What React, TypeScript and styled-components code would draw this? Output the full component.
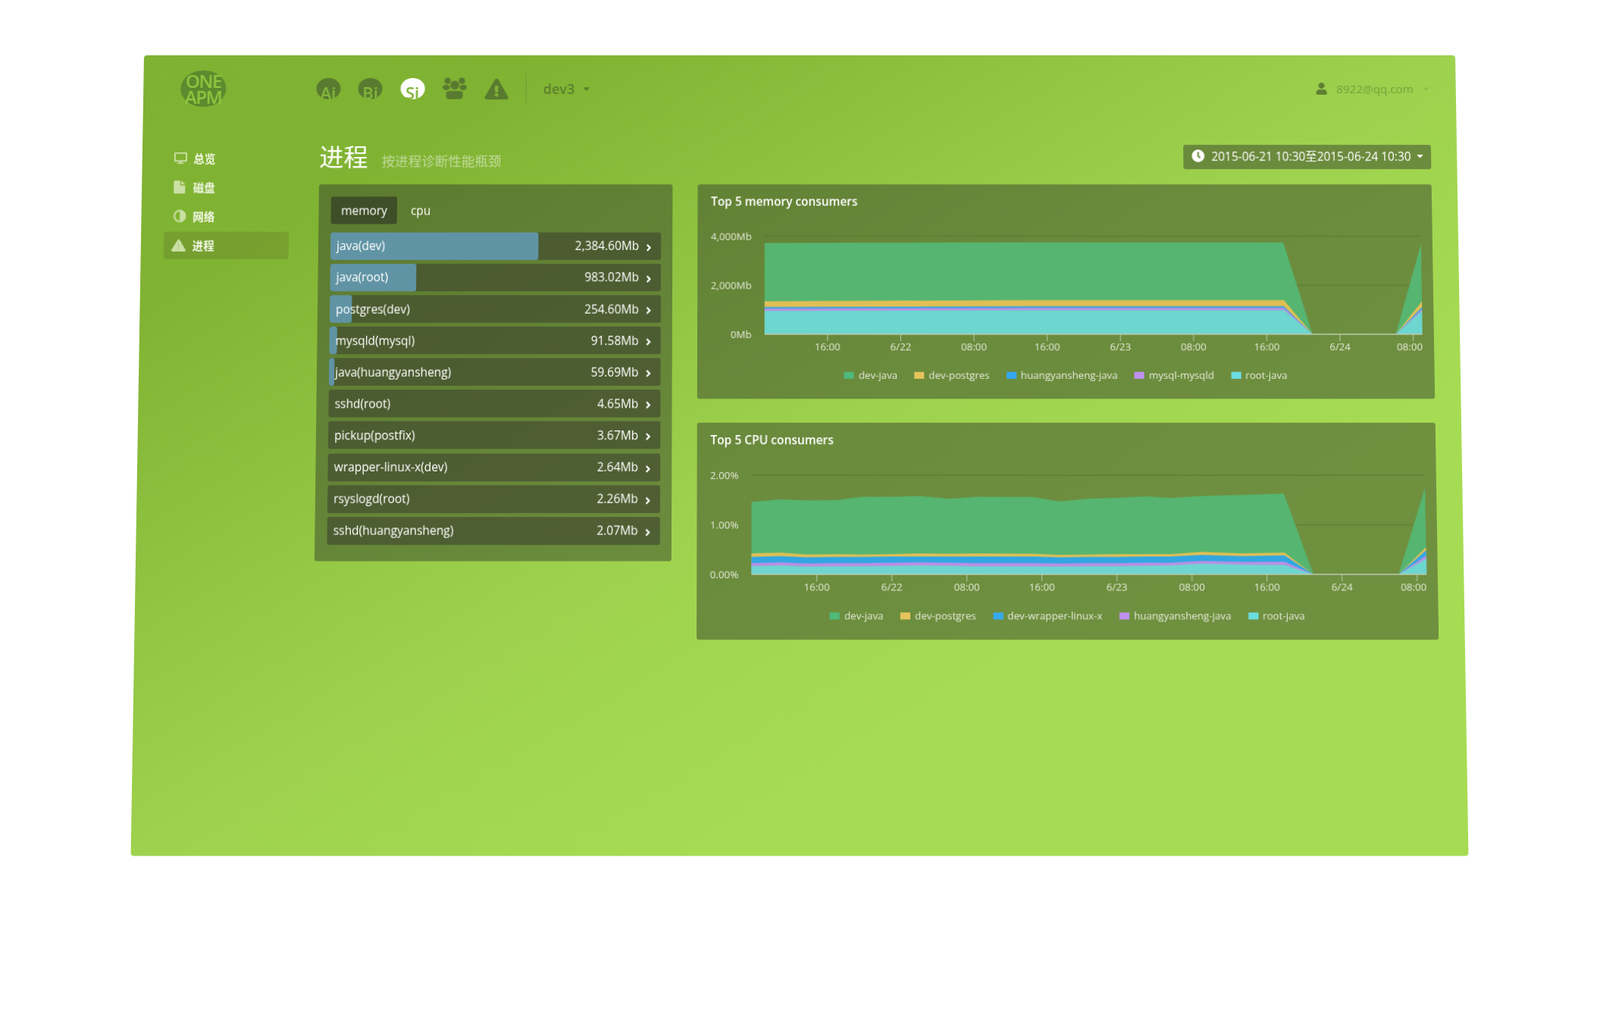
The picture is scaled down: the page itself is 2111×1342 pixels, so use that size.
import React from "react";
import styled, { createGlobalStyle } from "styled-components";
import { ChevronDown } from "lucide-react";
import { FaAdjust, FaAngleRight, FaCaretDown, FaClock, FaDesktop, FaExclamationTriangle, FaUser } from "react-icons/fa";

const Global = createGlobalStyle`
  html, body { margin: 0; padding: 0; background: #fff; }
  body { font-family: "Open Sans", "Noto Sans CJK SC", sans-serif; }
  * { box-sizing: border-box; }
`;

const Stage = styled.div`
  width: 2111px;
  height: 1342px;
  overflow: hidden;
  padding: 73px 0 0 190px;
  background: #fff;
`;

const Page = styled.div`
  width: 1730px;
  height: 1037px;
  border-radius: 4px;
  background: linear-gradient(to bottom right, #7fb232 0%, #80b332 16%, #9ed24e 50%, #a6dc53 72%, #a6dc53 100%);
  transform-origin: 50% 0;
  transform: perspective(2742px) rotateX(3deg);
  filter: blur(0.45px);
  color: #fff;
  font-size: 15.4px;
`;

const Header = styled.header`
  height: 88px;
  display: flex;
  align-items: center;
  padding: 0 33px 0 49px;
`;

const Logo = styled.div`
  width: 60px;
  height: 48px;
  border-radius: 50%;
  background: #5c8a2e;
  color: #8ec63f;
  margin-right: 118.5px;
  display: flex;
  flex-direction: column;
  align-items: center;
  justify-content: center;
  font-size: 24px;
  font-weight: 600;
  line-height: 21px;
  letter-spacing: -1.4px;
`;

const Products = styled.nav`
  display: flex;
  align-items: center;
  gap: 23.5px;
`;

const Product = styled.div<{ $active?: boolean }>`
  width: 32px;
  height: 28px;
  border-radius: 50%;
  overflow: hidden;
  display: flex;
  justify-content: center;
  align-items: flex-start;
  background: ${(p) => (p.$active ? "#fff" : "#587b30")};
  color: ${(p) => (p.$active ? "#7fb232" : "#85b83a")};
  font-size: 22px;
  font-weight: 600;
  line-height: 38px;
`;

const HeadGlyph = styled.span`
  width: 32px;
  display: flex;
  justify-content: center;
  color: #587b30;
  font-size: 31px;
  line-height: 0;
`;

const Divider = styled.span`
  width: 1px;
  height: 40px;
  background: #6f9a3c;
  margin: 0 22px 0 22.5px;
`;

const Tenant = styled.div`
  display: flex;
  align-items: center;
  gap: 9px;
  font-size: 18px;
  font-weight: 600;
  color: #5c7f2e;
`;

const Account = styled.div`
  margin-left: auto;
  display: flex;
  align-items: center;
  color: #74a03c;
  font-size: 15.2px;
`;

const AccountIcon = styled(FaUser)`
  color: #5f8034;
  font-size: 16px;
  margin-right: 12px;
`;

const AccountChevron = styled(ChevronDown)`
  width: 12px;
  height: 12px;
  margin-left: 11px;
`;

const Body = styled.div`
  display: flex;
`;

const Sidebar = styled.aside`
  width: 233px;
  padding: 29px 39px 0 29.5px;
  display: flex;
  flex-direction: column;
  gap: 2.2px;
`;

const NavItem = styled.div<{ $active?: boolean }>`
  height: 36px;
  padding-left: 12px;
  display: flex;
  align-items: center;
  border-radius: 4px;
  background: ${(p) => (p.$active ? "rgba(90, 110, 40, 0.28)" : "transparent")};
  font-size: 14.4px;
  font-weight: 700;
  color: #f4f8e8;
`;

const NavIcon = styled.span`
  width: 26px;
  display: flex;
  color: #cbe0a4;
  font-size: 17px;
  line-height: 0;
`;

const FlippedAdjust = styled(FaAdjust)`
  transform: scaleX(-1);
`;

const WarningSlot = styled(NavIcon)`
  margin-left: -2px;
  width: 28px;
`;

const Main = styled.main`
  width: 1463px;
`;

const TitleRow = styled.div`
  height: 32px;
  margin: 30px 0 20.4px;
  display: flex;
  align-items: center;
  justify-content: space-between;
`;

const TitleGroup = styled.div`
  display: flex;
  align-items: baseline;
  gap: 18px;
`;

const Title = styled.h1`
  margin: 0;
  font-size: 32px;
  line-height: 32px;
  font-weight: 400;
`;

const Subtitle = styled.span`
  font-size: 17.5px;
  color: rgba(255, 255, 255, 0.5);
`;

const DatePicker = styled.div`
  width: 326px;
  height: 32px;
  padding: 0 0 3px 11px;
  border-radius: 3px;
  background: rgba(56, 67, 44, 0.5);
  display: flex;
  align-items: center;
  gap: 9px;
  font-size: 15.4px;
  white-space: nowrap;
`;

const DateClock = styled(FaClock)`
  font-size: 17px;
`;

const DateCaret = styled(FaCaretDown)`
  font-size: 13px;
  margin-left: -3px;
`;

const Columns = styled.div`
  display: flex;
  align-items: flex-start;
  gap: 32.5px;
`;

const ListPanel = styled.section`
  width: 465px;
  height: 490px;
  padding: 16px 15.3px 0 16px;
  border-radius: 3px;
  background: rgba(56, 67, 44, 0.5);
`;

const Tabs = styled.div`
  display: flex;
  gap: 4px;
  margin-bottom: 10.5px;
`;

const Tab = styled.div<{ $active?: boolean }>`
  height: 36px;
  padding: 0 13.5px;
  border-radius: 3px;
  display: flex;
  align-items: center;
  background: ${(p) => (p.$active ? "#3e4f28" : "transparent")};
`;

const Rows = styled.div`
  display: flex;
  flex-direction: column;
  gap: 5.1px;
`;

const Row = styled.div`
  position: relative;
  height: 36px;
  padding: 0 8.5px 0 8px;
  display: flex;
  align-items: center;
  border-radius: 3px;
  overflow: hidden;
  background: rgba(63, 70, 47, 0.62);
`;

const RowBar = styled.div`
  position: absolute;
  left: 0;
  top: 0;
  bottom: 0;
  border-radius: 3px;
  background: #6094a4;
`;

const RowLabel = styled.span`
  position: relative;
  flex: 1;
`;

const RowValue = styled.span`
  position: relative;
`;

const RowChevron = styled(FaAngleRight)`
  position: relative;
  font-size: 14px;
  margin: 4px 0 0 6px;
`;

const Charts = styled.div`
  width: 965.5px;
  display: flex;
  flex-direction: column;
  gap: 31.5px;
`;

const ChartPanel = styled.section`
  height: 279.5px;
  padding-top: 12.6px;
  border-radius: 3px;
  background: rgba(56, 67, 44, 0.5);
`;

const ChartTitle = styled.h2`
  margin: 0 0 13.4px 18px;
  font-size: 15.4px;
  line-height: 20px;
  font-weight: 600;
  color: #fff;
`;

const Plot = styled.svg`
  display: block;
`;

const AxisText = styled.text`
  font-family: "Open Sans", sans-serif;
  font-size: 13.2px;
  fill: #e4ead8;
`;

const Legend = styled.div`
  margin-top: 14px;
  height: 18px;
  display: flex;
  justify-content: center;
  align-items: center;
  gap: 22px;
  font-size: 13.2px;
  color: #e4ead8;
`;

const LegendItem = styled.div`
  display: flex;
  align-items: center;
  gap: 6px;
`;

const Swatch = styled.span<{ $color: string }>`
  width: 13px;
  height: 9px;
  background: ${(p) => p.$color};
`;

function GroupIcon() {
  return (
    <svg width="34" height="30" viewBox="530 38 102 90" fill="currentColor">
      <circle cx="552" cy="50" r="13" />
      <circle cx="612" cy="50" r="13" />
      <ellipse cx="546" cy="78" rx="15" ry="12" />
      <ellipse cx="618" cy="78" rx="15" ry="12" />
      <circle cx="582" cy="68" r="20" stroke="#80b332" strokeWidth="3" />
      <rect x="545" y="92" width="72" height="36" rx="13" stroke="#80b332" strokeWidth="2" />
    </svg>
  );
}

function FileIcon() {
  return (
    <svg width="15" height="17" viewBox="0 0 15 17" fill="currentColor">
      <path d="M0 1.5C0 .7.7 0 1.5 0H8.6v5.2c0 .7.5 1.2 1.2 1.2H15v9.1c0 .8-.7 1.5-1.5 1.5h-12C.7 17 0 16.3 0 15.5V1.5z" />
      <path d="M10 0l5 5h-5V0z" />
    </svg>
  );
}

function PaleWarningIcon() {
  return (
    <svg width="19" height="16" viewBox="0 0 19 16">
      <path
        d="M8.2.8a1.5 1.5 0 0 1 2.6 0l7.9 13a1.5 1.5 0 0 1-1.3 2.2H1.6A1.5 1.5 0 0 1 .3 13.8L8.2.8z"
        fill="currentColor"
      />
      <path d="M8.8 5.5h1.4l-.2 5H9l-.2-5zM8.8 11.8h1.4v1.6H8.8z" fill="#a9c97f" />
    </svg>
  );
}

const AREA = {
  green: "#56b570",
  yellow: "#e0bf55",
  blue: "#31a6e2",
  purple: "#b98fe4",
  cyan: "#6cd6cf",
};

const SW = {
  green: "#4fb87a",
  yellow: "#e6c35c",
  blue: "#35a8f0",
  purple: "#c090f0",
  cyan: "#6cdce0",
};

type ChartDef = {
  title: string;
  plotX: number;
  plotW: number;
  yLabels: string[];
  firstTick: number;
  tickGap: number;
  xs: number[];
  layers: { color: string; tops: number[] }[];
  legend: { name: string; color: string }[];
};

const TICKS = ["16:00", "6/22", "08:00", "16:00", "6/23", "08:00", "16:00", "6/24", "08:00"];

const memory: ChartDef = {
  title: "Top 5 memory consumers",
  plotX: 88,
  plotW: 862,
  yLabels: ["4,000Mb", "2,000Mb", "0Mb"],
  firstTick: 82.6,
  tickGap: 95.9,
  xs: [0, 340, 681, 718, 827, 862],
  layers: [
    { color: AREA.green, tops: [8.7, 8, 8, 128, 128, 10] },
    { color: AREA.yellow, tops: [85, 83.5, 83.5, 128, 128, 85] },
    { color: AREA.blue, tops: [92.5, 91.5, 91.5, 128, 128, 92.5] },
    { color: AREA.purple, tops: [94.6, 93.5, 93.5, 128, 128, 95] },
    { color: AREA.cyan, tops: [97.5, 96.5, 96.5, 128, 128, 97.5] },
  ],
  legend: [
    { name: "dev-java", color: SW.green },
    { name: "dev-postgres", color: SW.yellow },
    { name: "huangyansheng-java", color: SW.blue },
    { name: "mysql-mysqld", color: SW.purple },
    { name: "root-java", color: SW.cyan },
  ],
};

const cpu: ChartDef = {
  title: "Top 5 CPU consumers",
  plotX: 71.3,
  plotW: 879,
  yLabels: ["2.00%", "1.00%", "0.00%"],
  firstTick: 85.1,
  tickGap: 97.7,
  xs: [0, 38, 72, 110, 144, 182, 220, 258, 292, 367, 402, 439, 477, 514, 546, 586, 640, 694.6, 731.8, 842.8, 879],
  layers: [
    { color: AREA.green, tops: [34.6, 31.3, 32.6, 32.3, 28, 28, 27, 30.6, 28, 28.3, 33.9, 30.3, 29.3, 27.3, 29.6, 27, 25.5, 23.7, 128, 128, 16] },
    { color: AREA.yellow, tops: [101, 100, 102.5, 102, 102.5, 102, 101, 101.5, 101, 101.5, 103, 102.5, 102, 102, 102, 99, 101, 100, 128, 128, 93] },
    { color: AREA.blue, tops: [105.5, 104.5, 106, 105.5, 105.5, 105, 105, 105, 105, 105, 106, 105.5, 105.5, 105, 105, 103, 104.5, 103.4, 128, 128, 97] },
    { color: AREA.purple, tops: [113.5, 112.5, 114, 113.5, 113.5, 113, 112.5, 113, 113.5, 113.5, 114, 113.5, 113.5, 113, 113, 110.7, 112, 111.7, 128, 128, 103.8] },
    { color: AREA.cyan, tops: [117.5, 116.5, 118, 117.8, 117.5, 117.2, 116.5, 117, 117.8, 117.8, 118, 117.5, 117.5, 117, 116.5, 114.3, 115.5, 116, 128, 128, 107.7] },
  ],
  legend: [
    { name: "dev-java", color: SW.green },
    { name: "dev-postgres", color: SW.yellow },
    { name: "dev-wrapper-linux-x", color: SW.blue },
    { name: "huangyansheng-java", color: SW.purple },
    { name: "root-java", color: SW.cyan },
  ],
};

const PLOT_TOP = 22;
const PLOT_H = 128;

function areaPoints(xs: number[], tops: number[]) {
  const line = xs.map((x, i) => `${x},${tops[i]}`).join(" ");
  return `0,${PLOT_H} ${line} ${xs[xs.length - 1]},${PLOT_H}`;
}

function Chart({ def }: { def: ChartDef }) {
  const { plotX, plotW } = def;
  return (
    <ChartPanel>
      <ChartTitle>{def.title}</ChartTitle>
      <Plot width={965} height={180}>
        {def.yLabels.map((label, i) => {
          const y = PLOT_TOP + (i * PLOT_H) / 2;
          return (
            <g key={label}>
              {i < 2 && <line x1={plotX} x2={plotX + plotW} y1={y} y2={y} stroke="#5b7833" strokeWidth={1} />}
              <AxisText x={plotX - 17} y={y + 5} textAnchor="end">
                {label}
              </AxisText>
            </g>
          );
        })}
        <g transform={`translate(${plotX} ${PLOT_TOP})`}>
          {def.layers.map((layer) => (
            <polygon key={layer.color} fill={layer.color} points={areaPoints(def.xs, layer.tops)} />
          ))}
          <line x1={0} x2={plotW} y1={PLOT_H} y2={PLOT_H} stroke="#bccab0" strokeWidth={1.4} />
          {TICKS.map((tick, i) => {
            const x = def.firstTick + i * def.tickGap;
            const clamp = x + 17 > plotW;
            return (
              <g key={i}>
                <line x1={x} x2={x} y1={PLOT_H} y2={PLOT_H + 9} stroke="#bccab0" strokeWidth={1} />
                <AxisText x={clamp ? plotW : x} y={PLOT_H + 21} textAnchor={clamp ? "end" : "middle"}>
                  {tick}
                </AxisText>
              </g>
            );
          })}
        </g>
      </Plot>
      <Legend>
        {def.legend.map((item) => (
          <LegendItem key={item.name}>
            <Swatch $color={item.color} />
            {item.name}
          </LegendItem>
        ))}
      </Legend>
    </ChartPanel>
  );
}

const processes: [string, number, string][] = [
  ["java(dev)", 2384.6, "2,384.60Mb"],
  ["java(root)", 983.02, "983.02Mb"],
  ["postgres(dev)", 254.6, "254.60Mb"],
  ["mysqld(mysql)", 91.58, "91.58Mb"],
  ["java(huangyansheng)", 59.69, "59.69Mb"],
  ["sshd(root)", 4.65, "4.65Mb"],
  ["pickup(postfix)", 3.67, "3.67Mb"],
  ["wrapper-linux-x(dev)", 2.64, "2.64Mb"],
  ["rsyslogd(root)", 2.26, "2.26Mb"],
  ["sshd(huangyansheng)", 2.07, "2.07Mb"],
];

const FULL_SCALE = 3787;

export default function App() {
  return (
    <Stage>
      <Global />
      <Page>
        <Header>
          <Logo>
            <span>ONE</span>
            <span>APM</span>
          </Logo>
          <Products>
            <Product>Ai</Product>
            <Product>Bi</Product>
            <Product $active>Si</Product>
            <HeadGlyph>
              <GroupIcon />
            </HeadGlyph>
            <HeadGlyph>
              <FaExclamationTriangle />
            </HeadGlyph>
          </Products>
          <Divider />
          <Tenant>
            dev3
            <FaCaretDown size={14} />
          </Tenant>
          <Account>
            <AccountIcon />
            8922@qq.com
            <AccountChevron />
          </Account>
        </Header>
        <Body>
          <Sidebar>
            <NavItem>
              <NavIcon>
                <FaDesktop />
              </NavIcon>
              总览
            </NavItem>
            <NavItem>
              <NavIcon>
                <FileIcon />
              </NavIcon>
              磁盘
            </NavItem>
            <NavItem>
              <NavIcon>
                <FlippedAdjust />
              </NavIcon>
              网络
            </NavItem>
            <NavItem $active>
              <WarningSlot>
                <PaleWarningIcon />
              </WarningSlot>
              进程
            </NavItem>
          </Sidebar>
          <Main>
            <TitleRow>
              <TitleGroup>
                <Title>进程</Title>
                <Subtitle>按进程诊断性能瓶颈</Subtitle>
              </TitleGroup>
              <DatePicker>
                <DateClock />
                2015-06-21 10:30至2015-06-24 10:30
                <DateCaret />
              </DatePicker>
            </TitleRow>
            <Columns>
              <ListPanel>
                <Tabs>
                  <Tab $active>memory</Tab>
                  <Tab>cpu</Tab>
                </Tabs>
                <Rows>
                  {processes.map(([name, value, label]) => {
                    const pct = (value / FULL_SCALE) * 100;
                    return (
                      <Row key={name}>
                        {pct >= 1 && <RowBar style={{ width: `${pct}%` }} />}
                        <RowLabel>{name}</RowLabel>
                        <RowValue>{label}</RowValue>
                        <RowChevron />
                      </Row>
                    );
                  })}
                </Rows>
              </ListPanel>
              <Charts>
                <Chart def={memory} />
                <Chart def={cpu} />
              </Charts>
            </Columns>
          </Main>
        </Body>
      </Page>
    </Stage>
  );
}
